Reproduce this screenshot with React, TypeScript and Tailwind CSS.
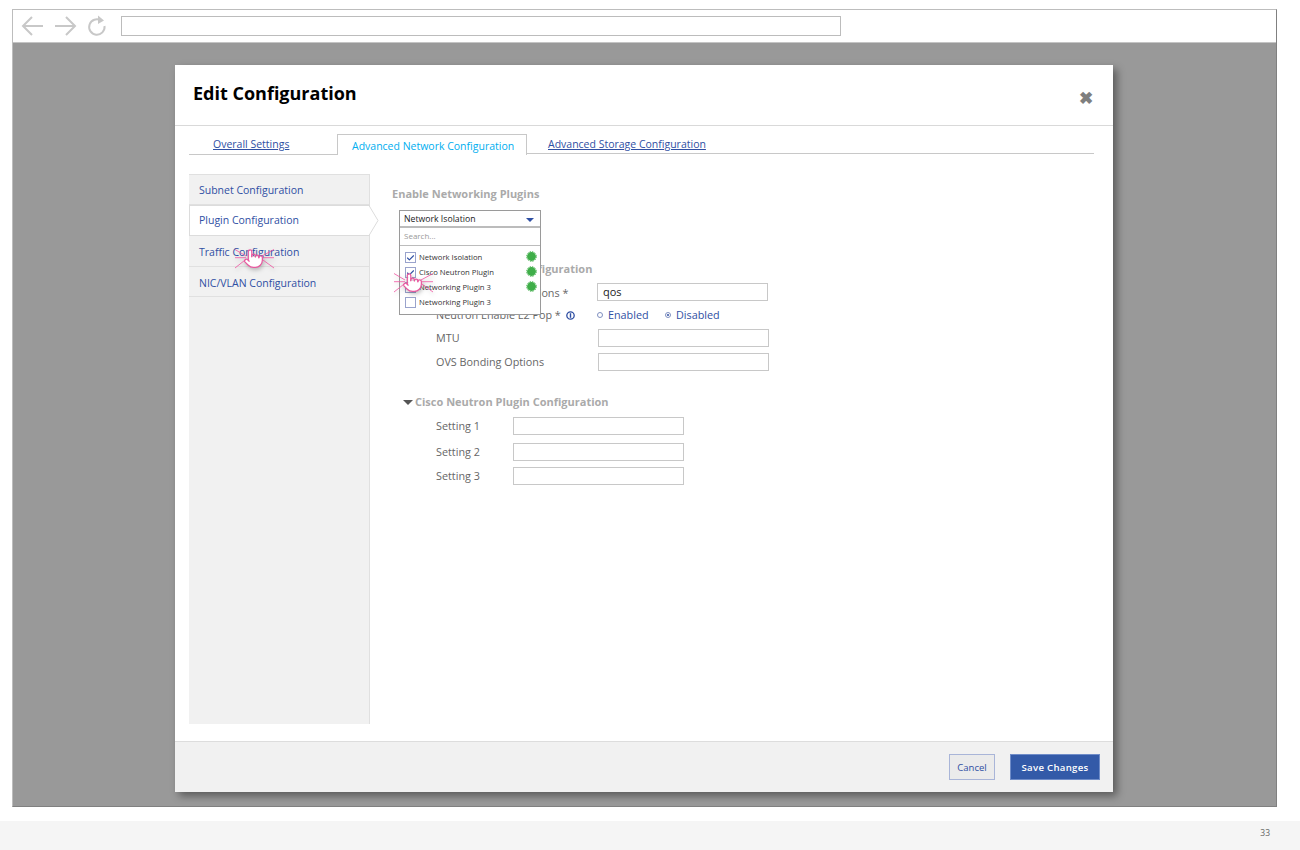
import { Check } from 'lucide-react';

const FONT = "font-['Open_Sans','Noto_Sans',sans-serif]";

const menuItems = ['Subnet Configuration', 'Plugin Configuration', 'Traffic Configuration', 'NIC/VLAN Configuration'];

// 클릭 표시용 손 커서
function ClickCursor({ className }: { className: string }) {
  return (
    <svg className={`absolute drop-shadow-[1px_2px_2px_rgba(0,0,0,0.25)] ${className}`} width="42" height="28" viewBox="0 0 42 28" fill="none">
      <g stroke="#f0509f" strokeWidth="0.8">
        <path d="M1 4.500 12 11" />
        <path d="M1 12.700H12" />
        <path d="M1 23 12 14.300" />
        <path d="M40 4.500 28 11" />
        <path d="M40 12.700H28" />
        <path d="M40 23 28 14.300" />
      </g>
      <g transform="translate(9 3) scale(0.88)" fill="#ffffff" stroke="#e8589f" strokeWidth="1.400" strokeLinecap="round" strokeLinejoin="round">
        <path d="M18 11a2 2 0 1 1 4 0v3a8 8 0 0 1-8 8h-2c-2.800 0-4.500-.860-5.990-2.340l-3.600-3.600a2 2 0 0 1 2.830-2.820L7 15V4a2 2 0 0 1 4 0v6h7z" stroke="none" />
        <path d="M18 11v-1a2 2 0 0 0-2-2a2 2 0 0 0-2 2" fill="none" />
        <path d="M14 10V9a2 2 0 0 0-2-2a2 2 0 0 0-2 2v1" fill="none" />
        <path d="M10 9.500V4a2 2 0 0 0-2-2a2 2 0 0 0-2 2v10" fill="none" />
        <path d="M18 11a2 2 0 1 1 4 0v3a8 8 0 0 1-8 8h-2c-2.800 0-4.500-.860-5.990-2.340l-3.600-3.600a2 2 0 0 1 2.830-2.820L7 15" fill="none" />
      </g>
    </svg>
  );
}

function GreenBadge() {
  return (
    <svg className="-mt-[3px]" width="11" height="11" viewBox="0 0 11 11">
      <circle cx="5.500" cy="5.500" r="4.400" fill="#3fae49" />
      <circle cx="5.500" cy="5.500" r="4.800" fill="none" stroke="#3fae49" strokeWidth="1" strokeDasharray="1.500 1" />
    </svg>
  );
}

function PluginOption({ label, checked, dot }: { label: string; checked?: boolean; dot?: boolean }) {
  return (
    <div className="flex h-[15px] items-center pl-[5px] pr-[3px]">
      <span className="flex h-[11px] w-[11px] items-center justify-center border border-[#9aa3cc] bg-white">
        {checked && <Check size={10} strokeWidth={3} className="text-[#2f4fa3]" />}
      </span>
      <span className="ml-[3px] flex-1 text-[7.700px] text-[#333]">{label}</span>
      {dot && <GreenBadge />}
    </div>
  );
}

function FieldRow({ label, width, labelWidth }: { label: string; width: string; labelWidth: string }) {
  return (
    <div className="flex h-[18px] items-center">
      <span className={`${labelWidth} text-[10.800px] text-[#666]`}>{label}</span>
      <span className={`${width} h-[18px] border border-[#c8c8c8] bg-white`} />
    </div>
  );
}

export default function App() {
  return (
    <div className={`${FONT} relative flex h-[850px] w-[1300px] flex-col overflow-hidden bg-white`}>
      <div className="ml-[12px] mt-[9px] flex h-[798px] w-[1265px] flex-col border border-[#bdbdbd] border-b-[#808080] border-r-[#808080]">
        {/* 브라우저 툴바 */}
        <div className="flex h-[33px] items-center border-b border-[#c4c4c4] bg-white pl-[8px]">
          <svg width="88" height="24" viewBox="0 0 88 24" fill="none" stroke="#c8c8c8" strokeWidth="2">
            <path d="M22 12H2M11 3l-9 9 9 9" />
            <path d="M34 12h20M45 3l9 9-9 9" />
            <path d="M80 6.500a7.700 7.700 0 1 0 3.500 5.500" />
            <path d="M77 1.500 83 6.500l-6 3.500z" fill="#c8c8c8" stroke="none" />
          </svg>
          <div className="ml-[12px] h-[20px] w-[720px] border border-[#bcbcbc] bg-white" />
        </div>

        {/* 모달 배경 */}
        <div className="flex-1 bg-[#999999] pl-[162px] pt-[22px]">
          <div className="flex h-[727px] w-[938px] flex-col bg-white shadow-[4px_4px_8px_rgba(0,0,0,0.4)]">
            <div className="relative h-[61px] border-b border-[#d9d9d9] pl-[18px] pt-[14px]">
              <h1 className="text-[18px] font-bold leading-[28px] text-black">Edit Configuration</h1>
              <span className="absolute left-[904px] top-[24px] text-[17px] font-bold leading-[17px] text-[#7f7f7f]">✖</span>
            </div>

            {/* 탭 */}
            <div className="mx-[14px] mt-[8px] flex h-[21px] w-[905px] items-start text-[10.500px]">
              <a className="h-[21px] w-[148px] border-b border-[#c8c8c8] pl-[24px] pt-[2px] leading-[17px] text-[#2f4fa3] underline">Overall Settings</a>
              <div className="h-[21px] w-[190px] border border-b-0 border-[#c8c8c8] bg-white pl-[14px] pt-[3px] leading-[17px] text-[#00aeef]">
                Advanced Network Configuration
              </div>
              <div className="h-[20px] flex-1 border-b border-[#c8c8c8] pl-[21px] pt-[2px] leading-[17px]">
                <a className="text-[#2f4fa3] underline">Advanced Storage Configuration</a>
              </div>
            </div>

            <div className="flex flex-1 pl-[14px] pt-[19px]">
              {/* 왼쪽 메뉴 */}
              <div className="h-[550px] w-[181px] border-r border-t border-[#e0e0e0] bg-[#f1f1f1]">
                {menuItems.map((item, i) =>
                  i === 1 ? (
                    <div key={item} className="relative z-10 flex h-[31px] w-[181px] items-center border border-[#dcdcdc] bg-white pl-[9px] text-[10.500px] text-[#2f4fa3]">
                      {item}
                      <svg className="absolute left-[179px] top-[-1px]" width="10" height="31" viewBox="0 0 10 31" fill="#ffffff" stroke="#dcdcdc">
                        <path d="M0 .500 9 15.500 0 30.500" />
                      </svg>
                    </div>
                  ) : (
                    <div key={item} className={`flex items-center border-b border-[#e0e0e0] pl-[10px] text-[10.500px] text-[#2f4fa3] ${i === 0 ? 'h-[30px] pt-[2px]' : i === 2 ? 'h-[31px] pt-[4px]' : 'h-[30px] pt-[4px]'}`}>
                      {item}
                    </div>
                  ),
                )}
              </div>

              {/* 오른쪽 폼 */}
              <div className="relative flex-1 pl-[22px]">
                <h2 className="pt-[12px] text-[11px] font-bold leading-[16px] text-[#aaaaaa]">Enable Networking Plugins</h2>

                <div className="pl-[44px] pt-[59px]">
                  <h2 className="-ml-[6px] text-[11px] font-bold leading-[16px] text-[#aaaaaa]">Neutron Plugin Configuration</h2>
                  <div className="mt-[6px] flex h-[18px] items-center">
                    <span className="w-[161px] pt-[2px] text-[10.800px] text-[#666]">Neutron ML2 Extensions *</span>
                    <span className="flex h-[18px] w-[171px] items-center border border-[#c8c8c8] bg-white pl-[5px] text-[11px] text-[#222]">qos</span>
                  </div>
                  <div className="mt-[5px] flex h-[18px] items-center">
                    <span className="w-[161px] text-[10.800px] text-[#666]">
                      Neutron Enable L2 Pop *
                    </span>
                    <span className="flex items-center text-[10.800px] text-[#2f4fa3]">
                      <span className="h-[6px] w-[6px] rounded-full border border-[#8090c0]" />
                      <span className="ml-[5px] w-[57px]">Enabled</span>
                      <span className="flex h-[6px] w-[6px] items-center justify-center rounded-full border border-[#8090c0]">
                        <span className="h-[2px] w-[2px] rounded-full bg-[#2f4fa3]" />
                      </span>
                      <span className="ml-[5px]">Disabled</span>
                    </span>
                  </div>
                  <div className="mt-[5px]">
                    <FieldRow label="MTU" labelWidth="w-[162px]" width="w-[171px]" />
                  </div>
                  <div className="mt-[6px]">
                    <FieldRow label="OVS Bonding Options" labelWidth="w-[162px]" width="w-[171px]" />
                  </div>
                </div>

                <div className="mt-[23px] flex items-center pl-[11px]">
                  <span className="h-0 w-0 border-x-[5px] border-t-[5px] border-x-transparent border-t-[#555]" />
                  <h2 className="ml-[2px] text-[11px] font-bold leading-[16px] text-[#aaaaaa]">Cisco Neutron Plugin Configuration</h2>
                </div>
                <div className="pl-[44px]">
                  <div className="mt-[7px]">
                    <FieldRow label="Setting 1" labelWidth="w-[77px]" width="w-[171px]" />
                  </div>
                  <div className="mt-[8px]">
                    <FieldRow label="Setting 2" labelWidth="w-[77px]" width="w-[171px]" />
                  </div>
                  <div className="mt-[6px]">
                    <FieldRow label="Setting 3" labelWidth="w-[77px]" width="w-[171px]" />
                  </div>
                </div>

                {/* L2 Pop 정보 아이콘 */}
                <svg className="absolute left-[196px] top-[137px]" width="9" height="9" viewBox="0 0 9 9">
                  <circle cx="4.500" cy="4.500" r="3.700" fill="none" stroke="#2f4fa3" strokeWidth="1.300" />
                  <rect x="3.800" y="2.200" width="1.400" height="4.600" fill="#2f4fa3" />
                </svg>

                {/* 플러그인 드롭다운 */}
                <div className="absolute left-[29px] top-[36px] w-[142px] border border-[#9a9a9a] bg-white">
                  <div className="flex h-[17px] items-center justify-between border-b-2 border-[#bcbcbc] pl-[4px] pr-[6px] pt-[2px] text-[8.700px] text-[#222]">
                    Network Isolation
                    <span className="h-0 w-0 border-x-[4px] border-t-[4px] border-x-transparent border-t-[#2f4fa3]" />
                  </div>
                  <div className="flex h-[18px] items-center border-b border-[#bcbcbc] pb-[2px] pl-[4px] text-[8px] text-[#999]">Search...</div>
                  <div className="h-[68px] pt-[4px]">
                    <PluginOption label="Network Isolation" checked dot />
                    <PluginOption label="Cisco Neutron Plugin" checked dot />
                    <PluginOption label="Networking Plugin 3" dot />
                    <PluginOption label="Networking Plugin 3" />
                  </div>
                </div>
              </div>
            </div>

            {/* 하단 버튼 */}
            <div className="flex h-[51px] items-start justify-end gap-[15px] border-t border-[#dddddd] bg-[#f1f1f1] pr-[13px] pt-[12px]">
              <button className="h-[26px] w-[46px] border border-[#a9b5d8] bg-[#ebebeb] pt-[2px] text-[9.500px] text-[#2f4fa3]">Cancel</button>
              <button className="h-[26px] w-[90px] border border-[#6f8cc8] bg-[#335aa8] pt-[2px] text-[9.600px] font-semibold tracking-[0.3px] text-white">Save Changes</button>
            </div>
          </div>
        </div>
      </div>

      <div className="mt-[14px] flex h-[29px] items-start justify-end bg-[#f5f5f5] pr-[30px] pt-[6px] text-[8.500px] text-[#666]">33</div>

      <ClickCursor className="left-[234px] top-[245px]" />
      <ClickCursor className="left-[393px] top-[269px]" />
    </div>
  );
}
